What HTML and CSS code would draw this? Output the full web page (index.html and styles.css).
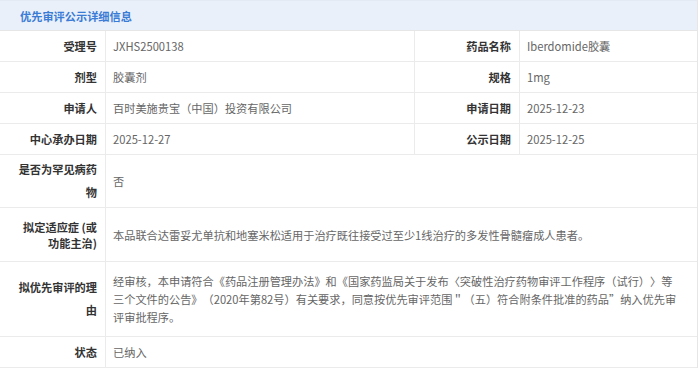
FILE: index.html
```html
<!DOCTYPE html>
<html lang="zh-CN">
<head>
<meta charset="utf-8">
<title>优先审评公示详细信息</title>
<link rel="stylesheet" href="styles.css">
</head>
<body>
<div class="panel">
  <div class="panel-head">优先审评公示详细信息</div>
  <div class="grid">
    <div class="lbl">受理号</div>
    <div class="val">JXHS2500138</div>
    <div class="lbl">药品名称</div>
    <div class="val">Iberdomide胶囊</div>

    <div class="lbl">剂型</div>
    <div class="val">胶囊剂</div>
    <div class="lbl">规格</div>
    <div class="val">1mg</div>

    <div class="lbl">申请人</div>
    <div class="val">百时美施贵宝（中国）投资有限公司</div>
    <div class="lbl">申请日期</div>
    <div class="val">2025-12-23</div>

    <div class="lbl">中心承办日期</div>
    <div class="val">2025-12-27</div>
    <div class="lbl">公示日期</div>
    <div class="val">2025-12-25</div>

    <div class="lbl lbl-wrap row-rare">是否为罕见病药物</div>
    <div class="val val-wide">否</div>

    <div class="lbl lbl-wrap lbl-tight row-ind">拟定适应症 (或功能主治)</div>
    <div class="val val-wide">本品联合达雷妥尤单抗和地塞米松适用于治疗既往接受过至少1线治疗的多发性骨髓瘤成人患者。</div>

    <div class="lbl lbl-wrap row-reason">拟优先审评的理由</div>
    <div class="val val-wide val-text">经审核，本申请符合《药品注册管理办法》和《国家药监局关于发布〈突破性治疗药物审评工作程序（试行）〉等三个文件的公告》（2020年第82号）有关要求，同意按优先审评范围＂（五）符合附条件批准的药品”纳入优先审评审批程序。</div>

    <div class="lbl">状态</div>
    <div class="val val-wide">已纳入</div>
  </div>
</div>
</body>
</html>
```

FILE: styles.css
```css
* { box-sizing: border-box; }
html, body { margin: 0; padding: 0; background: #fff; }
body {
  font-family: "Noto Sans CJK SC", "Noto Sans", sans-serif;
  font-size: 11.2px;
  color: #666;
  text-spacing-trim: space-all;
}
.panel {
  width: 698px;
  border-right: 1px solid #e6e6e6;
  border-top: 1px solid #e4eaf3;
}
.panel-head {
  height: 30px;
  background: #e9f0fa;
  color: #3a7bd5;
  font-weight: 700;
  padding-left: 20px;
  display: flex;
  align-items: center;
  border-bottom: 1px solid #e6e6e6;
}
.grid {
  display: grid;
  grid-template-columns: 106px 309px 105px 177px;
}
.lbl, .val {
  border-bottom: 1px solid #ebebeb;
  min-height: 31px;
  display: flex;
  align-items: center;
}
.lbl {
  border-right: 1px solid #ebebeb;
  justify-content: flex-end;
  text-align: right;
  padding: 0 8px 0 12px;
  color: #333;
  font-weight: 700;
}
.val {
  padding: 0 6px 0 7px;
  border-right: 1px solid #ebebeb;
}
.val:nth-child(4n) { border-right: none; }
.val-wide {
  grid-column: 2 / 5;
  border-right: none;
}
.lbl-wrap { line-height: 23px; }
.lbl-tight { line-height: 16px; }
.row-rare { height: 53px; }
.row-ind { height: 54px; }
.row-reason { height: 75px; }
.val-text { line-height: 18.3px; padding-right: 15px; }
```
